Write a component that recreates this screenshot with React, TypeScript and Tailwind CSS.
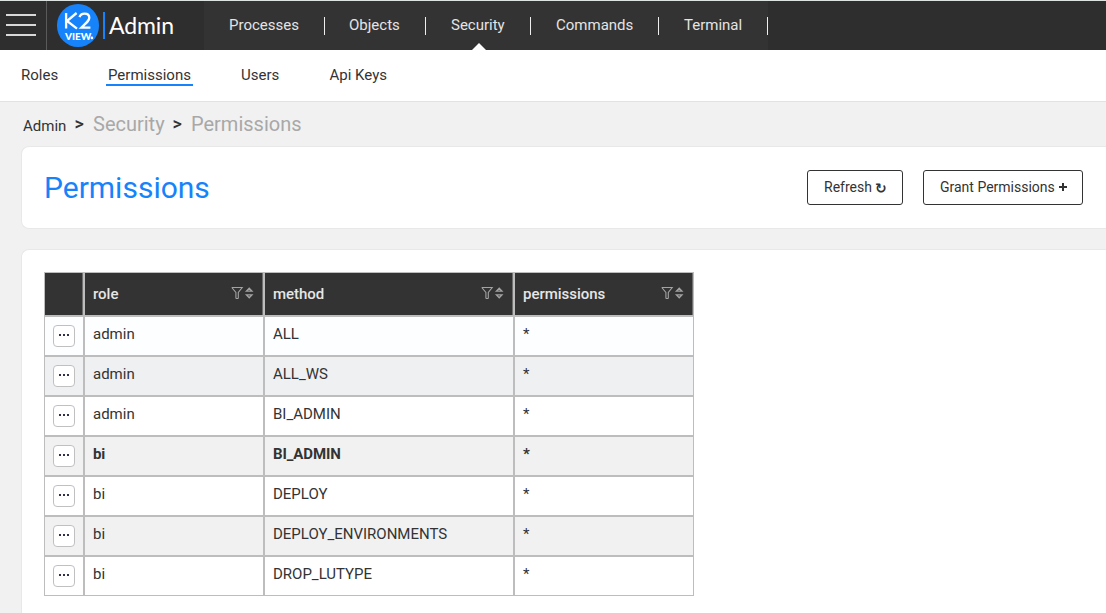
import React from "react";

const ROWS = [
  { role: "admin", method: "ALL", tone: "bg-[#fdfeff]" },
  { role: "admin", method: "ALL_WS", tone: "bg-[#eff0f2]" },
  { role: "admin", method: "BI_ADMIN", tone: "bg-white" },
  { role: "bi", method: "BI_ADMIN", tone: "bg-[#f1f1f1]", strong: true },
  { role: "bi", method: "DEPLOY", tone: "bg-white" },
  { role: "bi", method: "DEPLOY_ENVIRONMENTS", tone: "bg-[#f1f1f1]" },
  { role: "bi", method: "DROP_LUTYPE", tone: "bg-white" },
];

const NAV = [
  { label: "Processes", width: "w-[121px]", pad: "pl-[25px]" },
  { label: "Objects", width: "w-[101px]", pad: "pl-[24px]" },
  { label: "Security", width: "w-[105px]", pad: "pl-[25px]", active: true },
  { label: "Commands", width: "w-[128px]", pad: "pl-[25px]" },
  { label: "Terminal", width: "w-[109px]", pad: "pl-[25px]" },
];

const COLS = "grid grid-cols-[40px_180px_250px_180px]";

function Logo() {
  return (
    <div className="relative ml-[10px] mt-[3px] h-[43px] w-[42px] shrink-0 rounded-full bg-[#1683fb]">
      <svg className="absolute inset-0" width="43" height="43" viewBox="0 0 43 43" fill="none" stroke="#fff">
        <path d="M9.1 9V24.6M19.6 9L10 17L20 24.6" strokeWidth="2.3" />
        <path d="M22.5 13.2C23.3 10.7 25.3 9.7 27.5 9.7C30.4 9.7 32.3 11.4 32.3 13.8C32.3 16.2 30.6 17.8 24.4 23.6H33.4" strokeWidth="2.3" />
        <circle cx="34.9" cy="33.9" r="1.3" fill="#fff" stroke="none" />
      </svg>
      <span className="absolute left-[8px] top-[27px] font-['Lato'] text-[10px] font-black leading-[11px] text-white">VIEW</span>
    </div>
  );
}

function HeadIcons() {
  return (
    <svg width="24" height="14" viewBox="0 0 24 14" fill="none" stroke="#a3a3a3" strokeWidth="1.1">
      <path d="M0.8 1.5H11.2L7.3 6.5V12.5M4.9 12.5V6.5L0.8 1.5M4.9 12.5L7.3 12.5" />
      <path d="M15.4 5.2L18.2 2.2L21 5.2Z M15.4 8.8L18.2 11.8L21 8.8Z" strokeWidth="1.3" />
    </svg>
  );
}

function HeadCell({ label }: { label?: string }) {
  return (
    <div className="flex h-[44px] items-center border border-[#bdbdbd] bg-[#333] shadow-[inset_-1px_0_0_#707070]">
      {label && (
        <>
          <span className="flex-1 pl-[8px] text-[15px] font-medium leading-[20px] tracking-[-0.02px] text-[#e6e6e6]">{label}</span>
          <span className="mb-[2px] mr-[8px]"><HeadIcons /></span>
        </>
      )}
    </div>
  );
}

export default function App() {
  return (
    <div className="h-[613px] w-[1106px] overflow-hidden bg-[#f1f1f1] font-['Roboto',sans-serif] text-[15px] text-[#333]">
      <header className="flex h-[50px] border-t border-[#dde3e0] bg-[#2e2e2e]">
        <div className="flex w-[47px] shrink-0 flex-col gap-[8px] border-r border-[#5a5a5a] pl-[6px] pt-[13px]">
          <div className="h-[2px] w-[30px] bg-[#d8d8d8]" />
          <div className="h-[2px] w-[30px] bg-[#d8d8d8]" />
          <div className="h-[2px] w-[30px] bg-[#d8d8d8]" />
        </div>
        <div className="flex w-[157px] shrink-0">
          <Logo />
          <div className="ml-[4px] mt-[11px] h-[27px] w-[2px] bg-[#1683fb]" />
          <span className="ml-[4px] mt-[8px] font-['Lato'] text-[23px] leading-[32px] tracking-[-0.1px] text-white">Admin</span>
        </div>
        <nav className="flex bg-[#333]">
          {NAV.map((n) => (
            <div key={n.label} className={"relative flex h-[49px] items-center " + n.width}>
              <span className={"block flex-1 pb-[2px] text-[15px] leading-[20px] text-[#e4e4e4] " + n.pad}>{n.label}</span>
              <div className="h-[18px] w-px bg-[#eee]" />
              {n.active && (
                <svg className="absolute bottom-0 left-[46px]" width="14" height="7" viewBox="0 0 14 7">
                  <path d="M0 7L7 0L14 7Z" fill="#fff" />
                </svg>
              )}
            </div>
          ))}
        </nav>
      </header>

      <div className="flex h-[52px] border-b border-[#e2e2e2] bg-white pl-[21px] pt-[15px] text-[15px] leading-[20px]">
        <span className="w-[85px]">Roles</span>
        <span className="mr-[48px] h-[21px] w-[87px] border-b-2 border-[#1683fb] pl-[2px]">Permissions</span>
        <span className="w-[88.5px]">Users</span>
        <span>Api Keys</span>
      </div>

      <div className="flex h-[44px] pl-[23px] pt-[10px] leading-[24px]">
        <span className="w-[51.5px] pt-[2px] text-[15px]">Admin</span>
        <span className="w-[18.5px] text-[18px] font-medium">&gt;</span>
        <span className="w-[79.5px] text-[20px] text-[#a8a8a8]">Security</span>
        <span className="w-[18.5px] text-[18px] font-medium">&gt;</span>
        <span className="text-[20px] text-[#a8a8a8]">Permissions</span>
      </div>

      <section className="ml-[21px] flex h-[83px] rounded-l-[8px] border border-r-0 border-[#e8e8e8] bg-white pl-[22px]">
        <h1 className="mt-[22px] w-[763px] text-[30px] leading-[38px] text-[#1683fb]">Permissions</h1>
        <button className="mt-[23px] flex h-[35px] w-[96px] items-center rounded-[3px] border border-[#333] pb-[2px] pl-[16px] text-[14px] leading-[20px]">
          Refresh
          <span className="ml-[3px] mt-[2px] font-['DejaVu_Sans'] text-[14px] font-bold leading-[18px]">↻</span>
        </button>
        <button className="ml-[20px] mt-[23px] flex h-[35px] w-[160px] items-center rounded-[3px] border border-[#333] pb-[2px] pl-[16px] text-[14px] leading-[20px]">
          <span>Grant Permissions</span>
          <svg className="ml-[4px] mt-px" width="8" height="8" viewBox="0 0 8 8">
            <path d="M4 0V8M0 4H8" stroke="#333" strokeWidth="2" />
          </svg>
        </button>
      </section>

      <section className="ml-[21px] mt-[20px] h-[420px] rounded-tl-[8px] border-l border-t border-[#e8e8e8] bg-white pl-[22px] pt-[22px]">
        <div className={COLS + " w-[650px]"}>
          <HeadCell />
          <HeadCell label="role" />
          <HeadCell label="method" />
          <HeadCell label="permissions" />
        </div>
        {ROWS.map((r) => {
          const cell = "h-[40px] border border-[#bdbdbd] pl-[8px] pt-[7px] text-[15px] leading-[20px] " + r.tone + (r.strong ? " font-bold tracking-[-0.1px]" : "");
          return (
            <div key={r.role + r.method} className={COLS + " w-[650px]"}>
              <div className={"h-[40px] border border-[#bdbdbd] pl-[8px] pt-[8px] " + r.tone}>
                <button className="flex h-[22px] w-[22px] items-center justify-center gap-[2px] rounded-[4px] border border-[#c0c0c0] bg-white pb-[2px]">
                  <i className="h-[2px] w-[2px] bg-[#30304a]" />
                  <i className="h-[2px] w-[2px] bg-[#30304a]" />
                  <i className="h-[2px] w-[2px] bg-[#30304a]" />
                </button>
              </div>
              <div className={cell}>{r.role}</div>
              <div className={cell}>{r.method}</div>
              <div className={cell}>*</div>
            </div>
          );
        })}
      </section>
    </div>
  );
}
